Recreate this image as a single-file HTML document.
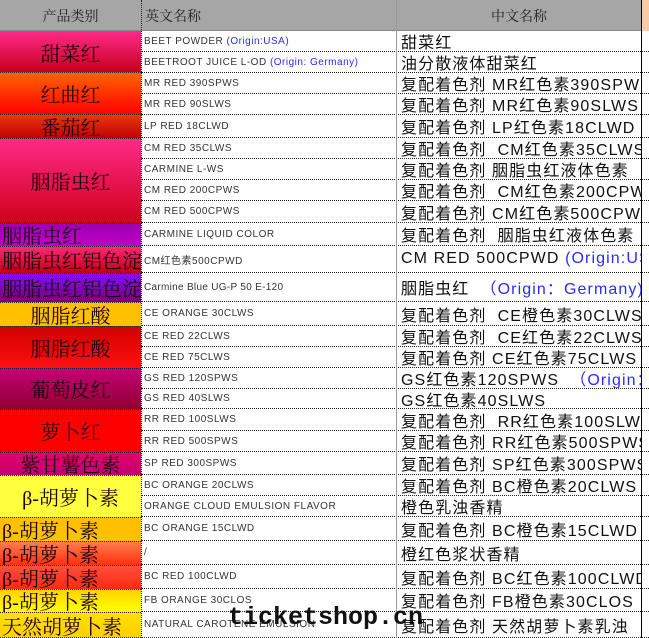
<!DOCTYPE html>
<html><head><meta charset="utf-8"><style>
*{margin:0;padding:0;box-sizing:border-box}
body{width:649px;height:638px;overflow:hidden;background:#fff;position:relative;font-family:"Liberation Sans","Noto Sans CJK SC",sans-serif}
.r{position:absolute;left:0;width:649px;border-bottom:1px dotted #222}
.c1{position:absolute;left:0;width:141px;top:0;bottom:0;color:#1a0010;font-family:"Liberation Serif","Noto Serif CJK SC",serif;font-size:20px;white-space:nowrap;overflow:hidden;display:flex;align-items:center;justify-content:center}
.c1.l{justify-content:flex-start;padding-left:2px}
.c2{position:absolute;left:145px;width:250px;top:0;bottom:0;font-size:10px;color:#333;display:flex;align-items:center;white-space:nowrap;overflow:hidden;letter-spacing:.5px}
.c3{position:absolute;left:401px;width:240px;top:0;bottom:0;font-size:16px;letter-spacing:1.1px;color:#111;display:flex;align-items:center;white-space:nowrap;overflow:hidden}
.b{color:#2b2bff}
.vl{position:absolute;top:0;height:638px}
.wm{position:absolute;left:228px;top:603px;font-family:"Liberation Mono",monospace;font-weight:bold;font-size:25px;color:#111}
</style></head><body>
<div style="position:absolute;left:0;top:0;width:641px;height:31px;background:#a6a6a6;border-bottom:1px solid #888"></div>
<div style="position:absolute;left:642px;top:0;width:7px;height:31px;background:#f8cba8"></div>
<div style="position:absolute;left:0;top:0;width:141px;height:31px;display:flex;align-items:center;justify-content:center;font-size:14px;color:#222;font-family:'Liberation Serif','Noto Serif CJK SC',serif">产品类别</div>
<div style="position:absolute;left:145px;top:0;height:31px;display:flex;align-items:center;font-size:14px;color:#222;font-family:'Liberation Serif','Noto Serif CJK SC',serif">英文名称</div>
<div style="position:absolute;left:397px;width:244px;top:0;height:31px;display:flex;align-items:center;justify-content:center;font-size:14px;color:#222;font-family:'Liberation Serif','Noto Serif CJK SC',serif">中文名称</div>

<div style="position:absolute;left:0;top:31px;width:141px;height:41px;background:linear-gradient(#ff2a8a,#c8001a)"></div>
<div style="position:absolute;left:0;top:72px;width:141px;height:42px;background:linear-gradient(#ff6600,#ff0000)"></div>
<div style="position:absolute;left:0;top:114px;width:141px;height:24px;background:linear-gradient(#e83a10,#c40000)"></div>
<div style="position:absolute;left:0;top:138px;width:141px;height:85px;background:linear-gradient(#ff2a8a,#d0001a)"></div>
<div style="position:absolute;left:0;top:223px;width:141px;height:23px;background:linear-gradient(#9a00b0,#c000c8)"></div>
<div style="position:absolute;left:0;top:246px;width:141px;height:27px;background:linear-gradient(#ff2a7a,#c00010)"></div>
<div style="position:absolute;left:0;top:273px;width:141px;height:29px;background:linear-gradient(#8010ff,#7a0070)"></div>
<div style="position:absolute;left:0;top:302px;width:141px;height:24px;background:#ffc000"></div>
<div style="position:absolute;left:0;top:326px;width:141px;height:42px;background:linear-gradient(#d00000,#ff1010)"></div>
<div style="position:absolute;left:0;top:368px;width:141px;height:41px;background:linear-gradient(#c8007a,#900030)"></div>
<div style="position:absolute;left:0;top:409px;width:141px;height:43px;background:#ff0000"></div>
<div style="position:absolute;left:0;top:452px;width:141px;height:23px;background:linear-gradient(#e8006a,#c00070)"></div>
<div style="position:absolute;left:0;top:475px;width:141px;height:42px;background:#ffff40"></div>
<div style="position:absolute;left:0;top:517px;width:141px;height:24px;background:#ffc000"></div>
<div style="position:absolute;left:0;top:541px;width:141px;height:24px;background:linear-gradient(#ff8050,#ff3010)"></div>
<div style="position:absolute;left:0;top:565px;width:141px;height:24px;background:linear-gradient(#ff5040,#ff2a10)"></div>
<div style="position:absolute;left:0;top:589px;width:141px;height:23px;background:linear-gradient(#ffd000,#ffff00)"></div>
<div style="position:absolute;left:0;top:612px;width:141px;height:26px;background:linear-gradient(#ffe000,#ffd000)"></div>

<div class="r" style="top:31px;height:42px;width:141px;border:0"><div class="c1">甜菜红</div></div>
<div class="r" style="top:72px;height:42px;width:141px;border:0"><div class="c1">红曲红</div></div>
<div class="r" style="top:114px;height:24px;width:141px;border:0"><div class="c1">番茄红</div></div>
<div class="r" style="top:138px;height:85px;width:141px;border:0"><div class="c1">胭脂虫红</div></div>
<div class="r" style="top:223px;height:23px;width:141px;border:0"><div class="c1 l">胭脂虫红</div></div>
<div class="r" style="top:246px;height:27px;width:141px;border:0"><div class="c1 l">胭脂虫红铝色淀</div></div>
<div class="r" style="top:273px;height:29px;width:141px;border:0"><div class="c1 l">胭脂虫红铝色淀</div></div>
<div class="r" style="top:302px;height:24px;width:141px;border:0"><div class="c1">胭脂红酸</div></div>
<div class="r" style="top:326px;height:42px;width:141px;border:0"><div class="c1">胭脂红酸</div></div>
<div class="r" style="top:368px;height:41px;width:141px;border:0"><div class="c1">葡萄皮红</div></div>
<div class="r" style="top:409px;height:43px;width:141px;border:0"><div class="c1">萝卜红</div></div>
<div class="r" style="top:452px;height:23px;width:141px;border:0"><div class="c1">紫甘薯色素</div></div>
<div class="r" style="top:475px;height:42px;width:141px;border:0"><div class="c1">β-胡萝卜素</div></div>
<div class="r" style="top:517px;height:24px;width:141px;border:0"><div class="c1 l">β-胡萝卜素</div></div>
<div class="r" style="top:541px;height:24px;width:141px;border:0"><div class="c1 l">β-胡萝卜素</div></div>
<div class="r" style="top:565px;height:24px;width:141px;border:0"><div class="c1 l">β-胡萝卜素</div></div>
<div class="r" style="top:589px;height:23px;width:141px;border:0"><div class="c1 l">β-胡萝卜素</div></div>
<div class="r" style="top:612px;height:26px;width:141px;border:0"><div class="c1 l">天然胡萝卜素</div></div>

<div style="position:absolute;left:0;width:141px;top:72px;border-top:1px dotted #222"></div>
<div style="position:absolute;left:0;width:141px;top:114px;border-top:1px dotted #222"></div>
<div style="position:absolute;left:0;width:141px;top:138px;border-top:1px dotted #222"></div>
<div style="position:absolute;left:0;width:141px;top:223px;border-top:1px dotted #222"></div>
<div style="position:absolute;left:0;width:141px;top:246px;border-top:1px dotted #222"></div>
<div style="position:absolute;left:0;width:141px;top:273px;border-top:1px dotted #222"></div>
<div style="position:absolute;left:0;width:141px;top:302px;border-top:1px dotted #222"></div>
<div style="position:absolute;left:0;width:141px;top:326px;border-top:1px dotted #222"></div>
<div style="position:absolute;left:0;width:141px;top:368px;border-top:1px dotted #222"></div>
<div style="position:absolute;left:0;width:141px;top:409px;border-top:1px dotted #222"></div>
<div style="position:absolute;left:0;width:141px;top:452px;border-top:1px dotted #222"></div>
<div style="position:absolute;left:0;width:141px;top:475px;border-top:1px dotted #222"></div>
<div style="position:absolute;left:0;width:141px;top:517px;border-top:1px dotted #222"></div>
<div style="position:absolute;left:0;width:141px;top:541px;border-top:1px dotted #222"></div>
<div style="position:absolute;left:0;width:141px;top:565px;border-top:1px dotted #222"></div>
<div style="position:absolute;left:0;width:141px;top:589px;border-top:1px dotted #222"></div>
<div style="position:absolute;left:0;width:141px;top:612px;border-top:1px dotted #222"></div>
<div style="position:absolute;left:0;width:649px;top:637px;border-top:1px dotted #222"></div>

<div class="r" style="left:141px;width:508px;top:31px;height:21px"><div class="c2" style="left:3px">BEET POWDER&nbsp;<span class="b">(Origin:USA)</span></div><div class="c3" style="left:260px">甜菜红</div></div>
<div class="r" style="left:141px;width:508px;top:52px;height:21px"><div class="c2" style="left:3px">BEETROOT JUICE L-OD&nbsp;<span class="b">(Origin: Germany)</span></div><div class="c3" style="left:260px">油分散液体甜菜红</div></div>
<div class="r" style="left:141px;width:508px;top:73px;height:21px"><div class="c2" style="left:3px">MR RED 390SPWS</div><div class="c3" style="left:260px">复配着色剂 MR红色素390SPWS</div></div>
<div class="r" style="left:141px;width:508px;top:94px;height:21px"><div class="c2" style="left:3px">MR RED 90SLWS</div><div class="c3" style="left:260px">复配着色剂 MR红色素90SLWS</div></div>
<div class="r" style="left:141px;width:508px;top:115px;height:23px"><div class="c2" style="left:3px">LP RED 18CLWD</div><div class="c3" style="left:260px">复配着色剂 LP红色素18CLWD</div></div>
<div class="r" style="left:141px;width:508px;top:138px;height:21px"><div class="c2" style="left:3px">CM RED 35CLWS</div><div class="c3" style="left:260px">复配着色剂&nbsp; CM红色素35CLWS</div></div>
<div class="r" style="left:141px;width:508px;top:159px;height:21px"><div class="c2" style="left:3px">CARMINE L-WS</div><div class="c3" style="left:260px">复配着色剂 胭脂虫红液体色素</div></div>
<div class="r" style="left:141px;width:508px;top:180px;height:21px"><div class="c2" style="left:3px">CM RED 200CPWS</div><div class="c3" style="left:260px">复配着色剂&nbsp; CM红色素200CPWS</div></div>
<div class="r" style="left:141px;width:508px;top:201px;height:22px"><div class="c2" style="left:3px">CM RED 500CPWS</div><div class="c3" style="left:260px">复配着色剂 CM红色素500CPWS</div></div>
<div class="r" style="left:141px;width:508px;top:223px;height:23px"><div class="c2" style="left:3px">CARMINE LIQUID COLOR</div><div class="c3" style="left:260px">复配着色剂&nbsp; 胭脂虫红液体色素</div></div>
<div class="r" style="left:141px;width:508px;top:246px;height:27px"><div class="c2" style="left:3px">CM红色素500CPWD</div><div class="c3" style="left:260px">CM RED 500CPWD&nbsp;<span class="b">(Origin:USA)</span></div></div>
<div class="r" style="left:141px;width:508px;top:273px;height:29px"><div class="c2" style="left:3px;letter-spacing:.3px">Carmine Blue UG-P 50 E-120</div><div class="c3" style="left:260px">胭脂虫红&nbsp;&nbsp;<span class="b">（Origin：Germany)</span></div></div>
<div class="r" style="left:141px;width:508px;top:302px;height:24px"><div class="c2" style="left:3px">CE ORANGE 30CLWS</div><div class="c3" style="left:260px">复配着色剂&nbsp; CE橙色素30CLWS</div></div>
<div class="r" style="left:141px;width:508px;top:326px;height:21px"><div class="c2" style="left:3px">CE RED 22CLWS</div><div class="c3" style="left:260px">复配着色剂&nbsp; CE红色素22CLWS</div></div>
<div class="r" style="left:141px;width:508px;top:347px;height:21px"><div class="c2" style="left:3px">CE RED 75CLWS</div><div class="c3" style="left:260px">复配着色剂 CE红色素75CLWS</div></div>
<div class="r" style="left:141px;width:508px;top:368px;height:21px"><div class="c2" style="left:3px">GS RED 120SPWS</div><div class="c3" style="left:260px">GS红色素120SPWS&nbsp;&nbsp;<span class="b">（Origin：</span></div></div>
<div class="r" style="left:141px;width:508px;top:389px;height:20px"><div class="c2" style="left:3px">GS RED 40SLWS</div><div class="c3" style="left:260px">GS红色素40SLWS</div></div>
<div class="r" style="left:141px;width:508px;top:409px;height:22px"><div class="c2" style="left:3px">RR RED 100SLWS</div><div class="c3" style="left:260px">复配着色剂&nbsp; RR红色素100SLWS</div></div>
<div class="r" style="left:141px;width:508px;top:431px;height:21px"><div class="c2" style="left:3px">RR RED 500SPWS</div><div class="c3" style="left:260px">复配着色剂 RR红色素500SPWS</div></div>
<div class="r" style="left:141px;width:508px;top:452px;height:23px"><div class="c2" style="left:3px">SP RED 300SPWS</div><div class="c3" style="left:260px">复配着色剂 SP红色素300SPWS</div></div>
<div class="r" style="left:141px;width:508px;top:475px;height:21px"><div class="c2" style="left:3px">BC ORANGE 20CLWS</div><div class="c3" style="left:260px">复配着色剂 BC橙色素20CLWS</div></div>
<div class="r" style="left:141px;width:508px;top:496px;height:21px"><div class="c2" style="left:3px">ORANGE CLOUD EMULSION FLAVOR</div><div class="c3" style="left:260px">橙色乳浊香精</div></div>
<div class="r" style="left:141px;width:508px;top:517px;height:24px"><div class="c2" style="left:3px">BC ORANGE 15CLWD</div><div class="c3" style="left:260px">复配着色剂 BC橙色素15CLWD</div></div>
<div class="r" style="left:141px;width:508px;top:541px;height:24px"><div class="c2" style="left:3px">/</div><div class="c3" style="left:260px">橙红色浆状香精</div></div>
<div class="r" style="left:141px;width:508px;top:565px;height:24px"><div class="c2" style="left:3px">BC RED 100CLWD</div><div class="c3" style="left:260px">复配着色剂 BC红色素100CLWD</div></div>
<div class="r" style="left:141px;width:508px;top:589px;height:23px"><div class="c2" style="left:3px">FB ORANGE 30CLOS</div><div class="c3" style="left:260px">复配着色剂 FB橙色素30CLOS</div></div>
<div class="r" style="left:141px;width:508px;top:612px;height:26px"><div class="c2" style="left:3px">NATURAL CAROTENE EMULSION</div><div class="c3" style="left:260px">复配着色剂 天然胡萝卜素乳浊</div></div>

<div class="vl" style="left:141px;border-left:1px dotted #222"></div>
<div class="vl" style="left:396px;width:1px;background:#999"></div>
<div class="vl" style="left:641px;width:1px;background:#000"></div>

<div class="wm">ticketshop.cn</div>
</body></html>
